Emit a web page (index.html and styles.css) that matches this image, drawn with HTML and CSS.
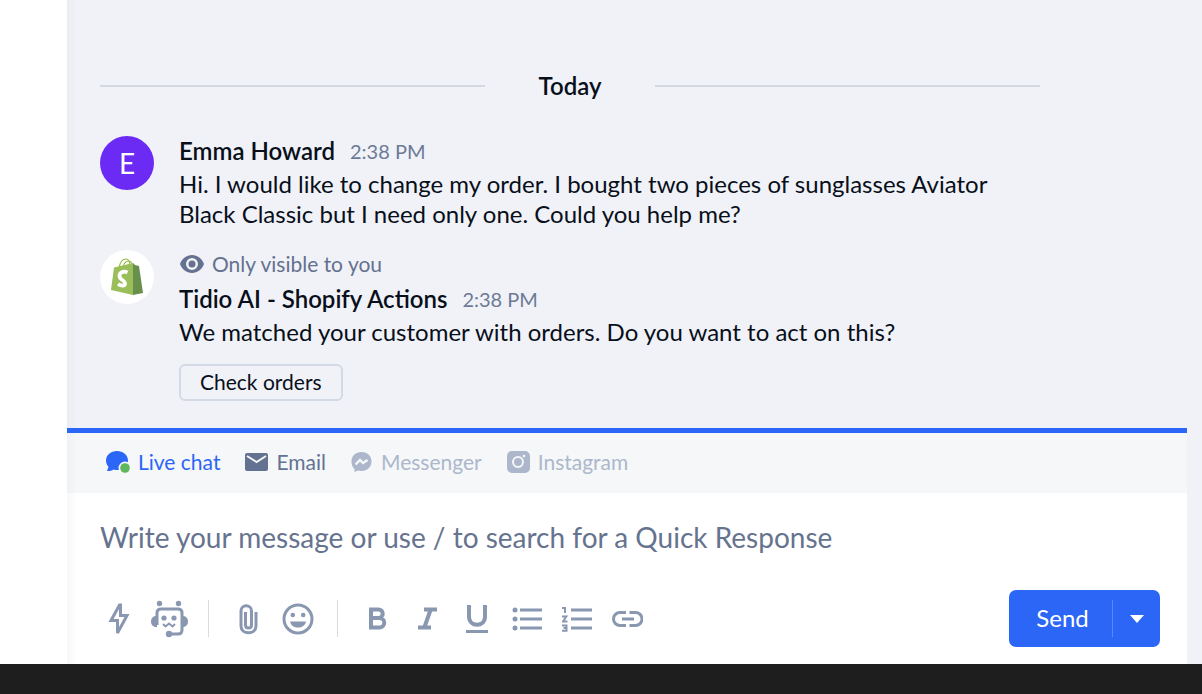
FILE: index.html
```html
<!DOCTYPE html>
<html lang="en">
<head>
  <meta charset="UTF-8">
  <meta name="viewport" content="width=device-width, initial-scale=1.0">
  <title>Conversation</title>
  <link rel="stylesheet" href="styles.css">
</head>
<body>

  <div class="app">
    <aside class="sidebar"></aside>

    <main class="panel">
      <!-- Conversation -->
      <section class="conversation">
        <div class="day"><span>Today</span></div>

        <article class="message">
          <div class="avatar avatar-user">E</div>
          <div class="message-body">
            <div class="message-head">
              <strong>Emma Howard</strong>
              <time>2:38 PM</time>
            </div>
            <p>Hi. I would like to change my order. I bought two pieces of sunglasses Aviator Black Classic but I need only one. Could you help me?</p>
          </div>
        </article>

        <article class="message">
          <div class="avatar avatar-shop">
            <svg width="34" height="38" viewBox="0 0 34 38">
              <path d="M9 10C10 4 13 1 16 1c3 0 4 3 4 8M13 9c1-4 3-6 6-6 2 0 3 2 4 5" fill="none" stroke="#95bf47" stroke-width="1.2"/>
              <path d="M4 9.500l19-4.500v32L1 32z" fill="#9abf5a"/>
              <path d="M23 5l2 2 4 1 4 27-10 2z" fill="#688f4b"/>
              <path d="M17.500 14.500c-4.500-2-8 0-8 3.500 0 4 5.500 4 5.500 7.500 0 3-4 2.500-7 .5" fill="none" stroke="#fff" stroke-width="3.800"/>
            </svg>
          </div>
          <div class="message-body">
            <div class="visibility">
              <svg width="26" height="20" viewBox="0 0 26 20">
                <path fill-rule="evenodd" d="M13 1C7.500 1 3 4.500 1 10c2 5.500 6.500 9 12 9s10-3.500 12-9C23 4.500 18.500 1 13 1zm0 3a6 6 0 1 1 0 12 6 6 0 0 1 0-12z"/>
                <circle cx="13" cy="10" r="3.500"/>
              </svg>
              Only visible to you
            </div>
            <div class="message-head">
              <strong>Tidio AI - Shopify Actions</strong>
              <time>2:38 PM</time>
            </div>
            <p>We matched your customer with orders. Do you want to act on this?</p>
            <button class="check-orders" type="button">Check orders</button>
          </div>
        </article>
      </section>

      <!-- Reply box -->
      <section class="composer">
        <nav class="channels">
          <button class="channel active" type="button">
            <svg width="25" height="24" viewBox="0 0 25 24">
              <path d="M12 1C6 1 1 5 1 10.500c0 2.500 1 4.500 2.500 6.500L2 21c3 0 5-.5 6.500-1.500 9 2.500 14.500-3 14.500-9C23 5 18 1 12 1z" fill="currentColor"/>
              <circle cx="20" cy="18" r="6.500" fill="#f5f7f9"/>
              <circle cx="20" cy="18" r="4.800" fill="#5eb75e"/>
            </svg>
            Live chat
          </button>
          <button class="channel" type="button">
            <svg width="24" height="24" viewBox="0 0 24 24">
              <rect x="1" y="3" width="23" height="18" rx="2" fill="currentColor"/>
              <path d="M3 6l9.500 6L22 6" fill="none" stroke="#f5f7f9" stroke-width="2"/>
            </svg>
            Email
          </button>
          <button class="channel" type="button" disabled>
            <svg width="23" height="24" viewBox="0 0 22 24">
              <path d="M11 2C5 2 1 6 1 11.500c0 3 1 5.500 3 7.500v3l3.500-1.500C15 22.500 21 18 21 11.500 21 6 17 2 11 2z" fill="currentColor"/>
              <path d="M5 14.500l4.500-4.500 3 3 4.500-3" fill="none" stroke="#f5f7f9" stroke-width="2.400"/>
            </svg>
            Messenger
          </button>
          <button class="channel" type="button" disabled>
            <svg width="24" height="24" viewBox="0 0 24 24">
              <rect x="1" y="1" width="23" height="22" rx="5" fill="currentColor"/>
              <circle cx="12" cy="12" r="5" fill="none" stroke="#f5f7f9" stroke-width="2"/>
              <circle cx="18" cy="6" r="1.300" fill="#f5f7f9"/>
            </svg>
            Instagram
          </button>
        </nav>

        <div class="editor">
          <textarea rows="1" aria-label="Message" placeholder="Write your message or use / to search for a Quick Response"></textarea>

          <div class="actions">
            <div class="tools">
              <button type="button" aria-label="Quick responses">
                <svg width="22" height="34" viewBox="0 0 22 34">
                  <path d="M11.500 3L3 18.500h6.500V31L19 13.500h-6.500V3z" class="line"/>
                </svg>
              </button>
              <button type="button" aria-label="Chatbots">
                <svg width="38" height="38" viewBox="0 0 38 38">
                  <circle cx="9.500" cy="3.500" r="2.700"/>
                  <circle cx="28.500" cy="3.500" r="2.700"/>
                  <path d="M7 25V13q0-4 4-4h17q4 0 4 4v17q0 4-4 4h-9" class="line"/>
                  <path d="M7 16v11C3 27 1 25 1 21.500S3 16 7 16zM32 16v11c4 0 6-2 6-5.500S36 16 32 16z"/>
                  <circle cx="19" cy="34" r="3.200"/>
                  <circle cx="14" cy="18" r="2.600"/>
                  <circle cx="24" cy="18" r="2.600"/>
                  <path d="M13 24l2.500 2.500L19 23.500l3.500 3L25 24" class="thin"/>
                </svg>
              </button>
              <span class="separator"></span>
              <button type="button" aria-label="Attach a file">
                <svg width="20" height="32" viewBox="0 0 20 32">
                  <path d="M18 9v14c0 9-15 9-15 0V8c0-7 10.500-7 10.500 0v14c0 4-6 4-6 0V9" class="line"/>
                </svg>
              </button>
              <button type="button" aria-label="Emoji">
                <svg width="32" height="32" viewBox="0 0 32 32">
                  <circle cx="16" cy="16" r="14" class="line"/>
                  <circle cx="10.800" cy="12" r="2.300"/>
                  <circle cx="21.200" cy="12" r="2.300"/>
                  <path d="M8 18.500h16c-1 4-4 6-8 6s-7-2-8-6z"/>
                </svg>
              </button>
              <span class="separator"></span>
              <button type="button" aria-label="Bold">
                <svg width="20" height="26" viewBox="0 0 20 26">
                  <path d="M4 3.500h7.500a4 4 0 0 1 0 8.500H4zM4 12h8.500a4.500 4.500 0 0 1 0 9.500H4z" class="heavy"/>
                </svg>
              </button>
              <button type="button" aria-label="Italic">
                <svg width="20" height="26" viewBox="0 0 20 26">
                  <path d="M7 3.500h13M1 21.500h13M13.500 4l-6 17" class="heavy"/>
                </svg>
              </button>
              <button type="button" aria-label="Underline">
                <svg width="22" height="30" viewBox="0 0 22 30">
                  <path d="M3 1v11.500c0 11 16 11 16 0V1" class="heavy"/>
                  <path d="M0 27.500h22" class="line"/>
                </svg>
              </button>
              <button type="button" aria-label="Bulleted list">
                <svg width="30" height="26" viewBox="0 0 30 26">
                  <circle cx="3" cy="4" r="2.500"/>
                  <circle cx="3" cy="13" r="2.500"/>
                  <circle cx="3" cy="22" r="2.500"/>
                  <path d="M8 4h22M8 13h22M8 22h22" class="line"/>
                </svg>
              </button>
              <button type="button" aria-label="Numbered list">
                <svg width="30" height="26" viewBox="0 0 30 26">
                  <path d="M0 2h3v5M0 10.500h4.300L1 15.500h4.500M0 19.500h4.500V22H1.500M4.500 22v2.700H0" class="thin"/>
                  <path d="M9 4h21M9 13h21M9 22h21" class="line"/>
                </svg>
              </button>
              <button type="button" aria-label="Link">
                <svg width="32" height="18" viewBox="0 0 32 18">
                  <path d="M15 2.500H9a6.500 6.500 0 0 0 0 13h6M18.500 2.500h6a6.500 6.500 0 0 1 0 13h-6M11 9h12" class="line"/>
                </svg>
              </button>
            </div>

            <div class="send-group">
              <button class="send" type="button">Send</button>
              <button class="send-more" type="button" aria-label="More send options">
                <svg width="14" height="8" viewBox="0 0 14 8"><path d="M0 0h14L7 8z" fill="currentColor"/></svg>
              </button>
            </div>
          </div>
        </div>
      </section>
    </main>
  </div>

  <footer class="bottom-bar"></footer>

</body>
</html>
```
FILE: styles.css
```css
/* General Styles */
* {
  box-sizing: border-box;
}

body {
  margin: 0;
  min-height: 100vh;
  display: flex;
  flex-direction: column;
  font-family: Lato, "Liberation Sans", sans-serif;
  font-size: 24px;
  line-height: 30px;
  color: #080f1a;
  background: #f0f2f7;
}

button,
textarea {
  font: inherit;
  border: none;
  background: none;
  padding: 0;
}

button {
  cursor: pointer;
}

p {
  margin: 0;
}

.app {
  flex: 1;
  display: flex;
}

.sidebar {
  width: 67px;
  background: #ffffff;
}

.panel {
  flex: 1;
  display: flex;
  flex-direction: column;
  background: linear-gradient(90deg, #e9ecf1, #f0f2f7 10px);
}

/* Conversation */
.conversation {
  flex: 1;
  display: flex;
  flex-direction: column;
  justify-content: flex-end;
  gap: 21px;
  padding: 0 162px 27px 33px;
}

.day {
  display: flex;
  align-items: center;
  gap: 54px;
  margin-bottom: 14px;
  font-weight: 600;
}

.day::before,
.day::after {
  content: "";
  flex: 1;
  height: 2px;
  background: #d3d8e1;
}

.message {
  display: flex;
  gap: 25px;
}

.avatar {
  flex: none;
  width: 54px;
  height: 54px;
  border-radius: 50%;
  display: flex;
  align-items: center;
  justify-content: center;
}

.avatar-user {
  background: #6b2bf4;
  color: #ffffff;
  font-size: 28px;
}

.avatar-shop {
  background: #ffffff;
}

.message-head {
  display: flex;
  align-items: center;
  gap: 15px;
  margin-bottom: 3px;
}

.message-head strong {
  font-weight: 600;
}

.message-head time {
  font-size: 20px;
  line-height: 28px;
  color: #6d7a96;
}

.visibility {
  display: flex;
  align-items: center;
  gap: 7px;
  margin-bottom: 7px;
  line-height: 27px;
  font-size: 21px;
  color: #64718f;
}

.visibility svg {
  fill: #64718f;
}

.check-orders {
  margin-top: 17px;
  padding: 0 19px 2px;
  height: 37px;
  border: 2px solid #d3dae6;
  border-radius: 6px;
  font-size: 21px;
  color: #080f1a;
}

/* Reply box */
.composer {
  margin-right: 15px;
  border-top: 5px solid #2c66f6;
  background: #ffffff;
}

.channels {
  display: flex;
  gap: 24px;
  padding: 14px 38px 16px;
  background: linear-gradient(90deg, #eff1f4, #f5f7f9 10px);
}

.channel {
  display: flex;
  align-items: center;
  gap: 8px;
  font-size: 21px;
  color: #647291;
}

.channel.active {
  color: #2c66f6;
}

.channel:disabled {
  color: #acb7cb;
}

.editor {
  padding: 26px 27px 17px;
  background: linear-gradient(90deg, #f7f8fa, #ffffff 10px);
}

.editor textarea {
  display: block;
  width: 100%;
  height: 36px;
  margin-bottom: 35px;
  padding: 0 6px;
  resize: none;
  outline: none;
  overflow: hidden;
  font-size: 28px;
  line-height: 36px;
}

.editor textarea::placeholder {
  color: #66738f;
  opacity: 1;
}

.actions {
  display: flex;
  align-items: center;
  justify-content: space-between;
}

.tools {
  display: flex;
  align-items: center;
}

.tools button {
  width: 50px;
  height: 40px;
  display: flex;
  align-items: center;
  justify-content: center;
}

.tools svg {
  fill: #8a97b1;
}

.tools .line,
.tools .thin,
.tools .heavy {
  fill: none;
  stroke: #8a97b1;
  stroke-width: 3;
}

.tools .thin {
  stroke-width: 2;
}

.tools .heavy {
  stroke-width: 4;
}

.separator {
  width: 1px;
  height: 37px;
  margin: 0 14px;
  background: #d5dae3;
}

/* Send button */
.send-group {
  display: flex;
  align-items: center;
  height: 57px;
  border-radius: 7px;
  background: #2c66f6;
}

.send-group button {
  height: 37px;
  color: #ffffff;
}

.send-group .send {
  width: 104px;
  padding: 0 0 2px 4px;
  border-right: 1px solid #5c89f9;
}

.send-group .send-more {
  width: 47px;
  display: flex;
  align-items: center;
  justify-content: center;
}

/* Bottom bar */
.bottom-bar {
  height: 30px;
  background: #1e1e1e;
}
```
